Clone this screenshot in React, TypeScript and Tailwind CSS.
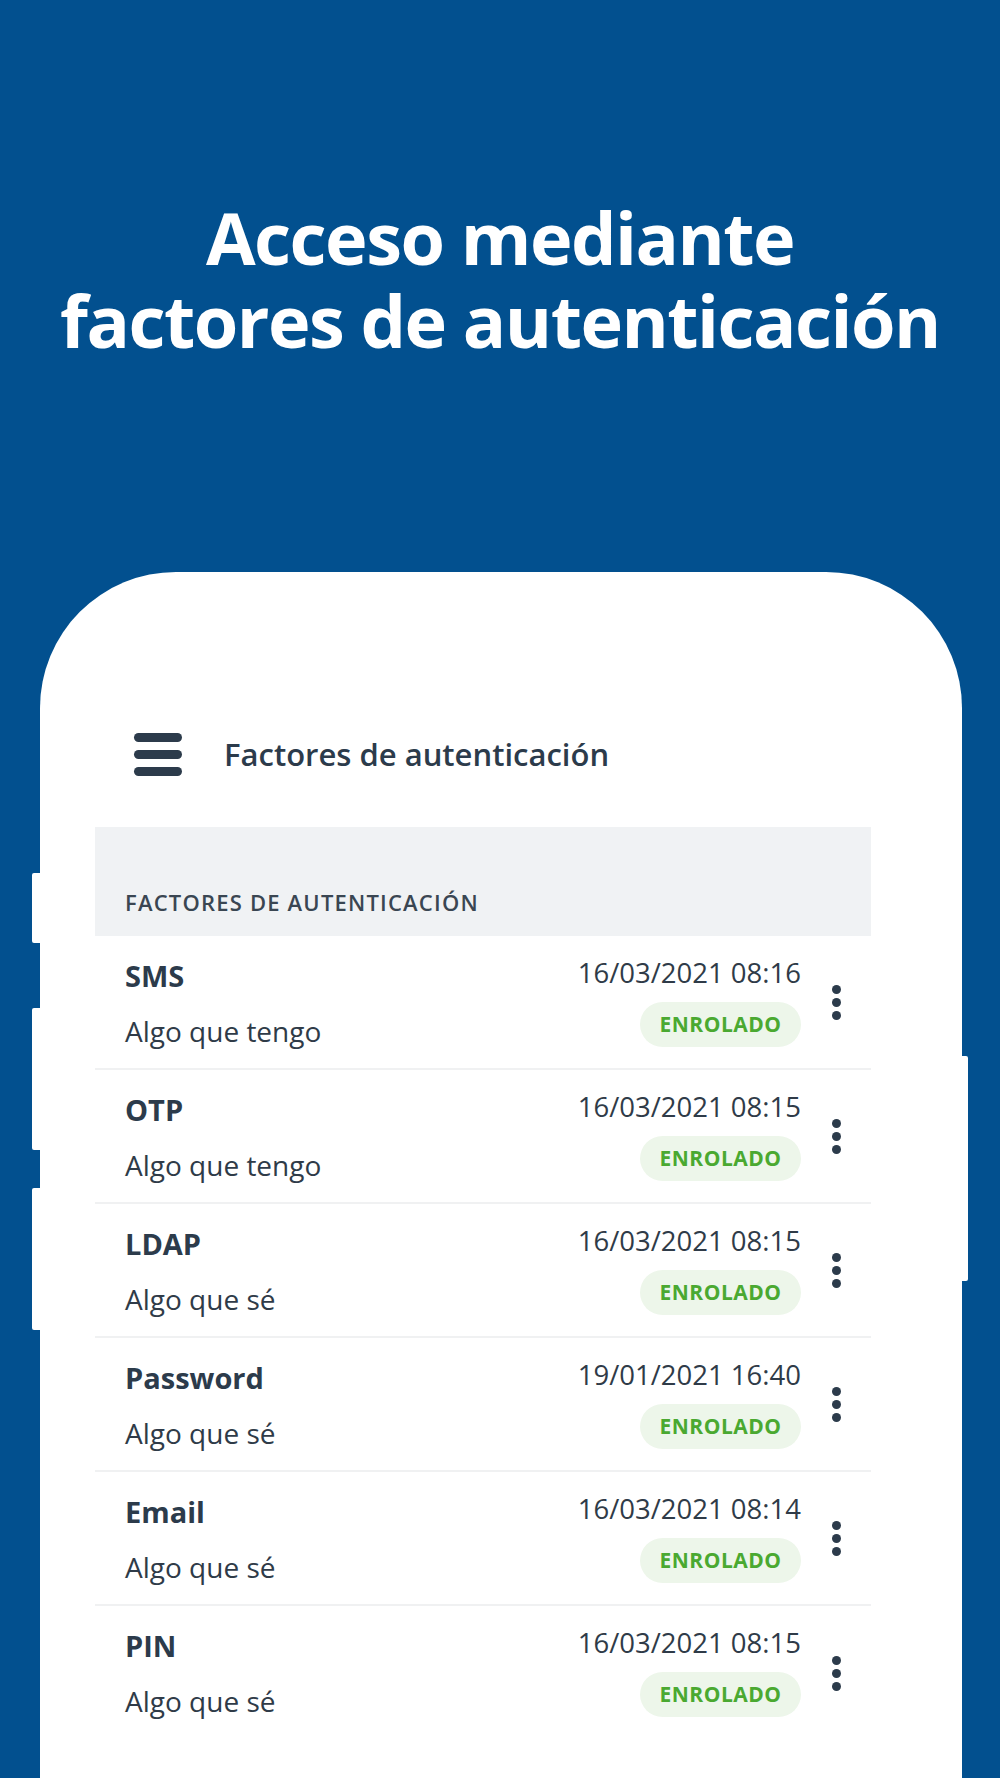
import { FC } from "react";

type Factor = {
  name: string;
  kind: string;
  date: string;
};

const factors: Factor[] = [
  { name: "SMS", kind: "Algo que tengo", date: "16/03/2021 08:16" },
  { name: "OTP", kind: "Algo que tengo", date: "16/03/2021 08:15" },
  { name: "LDAP", kind: "Algo que sé", date: "16/03/2021 08:15" },
  { name: "Password", kind: "Algo que sé", date: "19/01/2021 16:40" },
  { name: "Email", kind: "Algo que sé", date: "16/03/2021 08:14" },
  { name: "PIN", kind: "Algo que sé", date: "16/03/2021 08:15" },
];

const Kebab = () => (
  <div className="w-[9px] flex flex-col gap-[4px] ml-[31px]">
    <span className="w-[9px] h-[9px] rounded-full bg-[#2c3b4b]" />
    <span className="w-[9px] h-[9px] rounded-full bg-[#2c3b4b]" />
    <span className="w-[9px] h-[9px] rounded-full bg-[#2c3b4b]" />
  </div>
);

const FactorRow: FC<{ factor: Factor; last: boolean }> = ({ factor, last }) => (
  <div
    className={`h-[134px] pl-[30px] pr-[30px] flex items-center ${
      last ? "" : "border-b-2 border-[#f0f1f2]"
    }`}
  >
    <div className="flex-1 self-stretch pt-[22px]">
      <p className="text-[29px] leading-[36px] font-bold text-[#2c3b4b]">{factor.name}</p>
      <p className="mt-[20px] text-[28px] leading-[34px] text-[#2f3b48]">{factor.kind}</p>
    </div>
    <div className="self-stretch pt-[20px] flex flex-col items-end">
      <p className="text-[27.5px] leading-[34px] text-[#2f3b48]">{factor.date}</p>
      <span className="mt-[12px] h-[45px] w-[161px] rounded-full bg-[#edf6ea] flex items-center justify-center text-[21px] leading-[45px] font-bold tracking-[0.5px] text-[#4aa931]">
        ENROLADO
      </span>
    </div>
    <Kebab />
  </div>
);

const App = () => {
  return (
    <div className="w-[1000px] h-[1778px] bg-[#02508f] overflow-hidden flex flex-col font-['Open_Sans',sans-serif]">
      {/* ======================= Title ======================= */}
      <h1 className="mt-[196px] text-center text-white font-bold text-[72px] leading-[83px] tracking-[-1.5px]">
        Acceso mediante
        <br />
        factores de autenticación
      </h1>

      {/* ======================= Phone ======================= */}
      <div className="relative mt-[210px] ml-[40px] w-[922px] flex-1 bg-white rounded-t-[136px] pt-[158px] pl-[55px] pr-[91px]">
        {/* side buttons */}
        <span className="absolute -left-[8px] top-[301px] w-[8px] h-[70px] bg-white rounded-l-[2px]" />
        <span className="absolute -left-[8px] top-[436px] w-[8px] h-[142px] bg-white rounded-l-[2px]" />
        <span className="absolute -left-[8px] top-[616px] w-[8px] h-[142px] bg-white rounded-l-[2px]" />
        <span className="absolute -right-[6px] top-[484px] w-[6px] h-[225px] bg-white rounded-r-[2px]" />

        {/* header */}
        <div className="h-[48px] flex items-center">
          <div className="ml-[39px] w-[48px] flex flex-col gap-[8px]">
            <span className="h-[9px] rounded-full bg-[#2c3b4b]" />
            <span className="h-[9px] rounded-full bg-[#2c3b4b]" />
            <span className="h-[9px] rounded-full bg-[#2c3b4b]" />
          </div>
          <p className="ml-[42px] text-[31px] leading-[40px] font-semibold text-[#2c3b4b]">
            Factores de autenticación
          </p>
        </div>

        {/* section header */}
        <div className="mt-[49px] h-[109px] bg-[#f0f2f4] flex items-end pl-[30px] pb-[20px]">
          <p className="text-[22px] leading-[28px] font-semibold tracking-[1.2px] text-[#3a4652]">
            FACTORES DE AUTENTICACIÓN
          </p>
        </div>

        {/* list */}
        <div className="flex flex-col">
          {factors.map((f, i) => (
            <FactorRow key={f.name} factor={f} last={i === factors.length - 1} />
          ))}
        </div>
      </div>
    </div>
  );
};

export default App;
